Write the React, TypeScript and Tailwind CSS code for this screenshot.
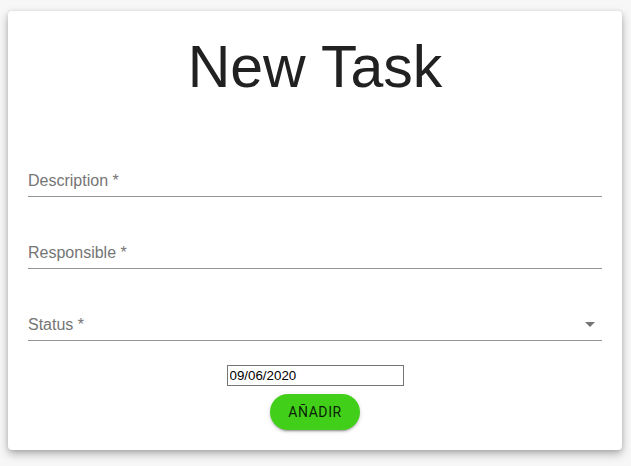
import React from "react";

function Field({ label, select }: { label: string; select?: boolean }) {
  return (
    <div className="relative h-[72px] flex items-end pb-[6px] border-b border-[#949494]">
      <span className="text-[16px] leading-[19px] text-[#757575]" style={{ fontFamily: '"Liberation Sans", Arial, sans-serif' }}>
        {label}
      </span>
      {select && (
        <svg className="absolute right-0 bottom-[4px] w-6 h-6" viewBox="0 0 24 24">
          <path d="M7 10l5 5 5-5z" fill="rgba(0,0,0,0.54)" />
        </svg>
      )}
    </div>
  );
}

export default function App() {
  return (
    <div className="w-[631px] h-[466px] bg-[#f7f7f7] pt-[11px] pl-[8px] overflow-hidden">
      <div className="w-[614px] h-[439px] bg-white rounded-[4px] shadow-[0px_4px_10px_rgba(0,0,0,0.28),0px_1px_4px_rgba(0,0,0,0.12)] px-[20px] pt-[20px] flex flex-col">
        <h1
          className="text-center text-[59px] leading-[72px] font-normal text-[#212121]"
          style={{ fontFamily: '"Liberation Sans", Arial, sans-serif' }}
        >
          New Task
        </h1>
        <div className="mt-[22px] w-[574px]">
          <Field label="Description *" />
          <Field label="Responsible *" />
          <Field label="Status *" select />
        </div>
        <div className="flex flex-col items-center mt-[24px]">
          <input
            readOnly
            defaultValue="09/06/2020"
            className="w-[177px] h-[21px] border border-[#767676] px-[2px] text-[13.33px] text-black outline-none"
            style={{ fontFamily: '"Liberation Sans", Arial, sans-serif' }}
          />
          <button
            className="mt-[8px] w-[90px] h-[36px] rounded-full bg-[#41cf1a] text-[14px] font-normal tracking-[0.6px] text-[rgba(0,0,0,0.87)] shadow-[0px_3px_1px_-2px_rgba(0,0,0,0.2),0px_2px_2px_0px_rgba(0,0,0,0.14),0px_1px_5px_0px_rgba(0,0,0,0.12)]"
            style={{ fontFamily: "Roboto, sans-serif" }}
          >
            AÑADIR
          </button>
        </div>
      </div>
    </div>
  );
}
